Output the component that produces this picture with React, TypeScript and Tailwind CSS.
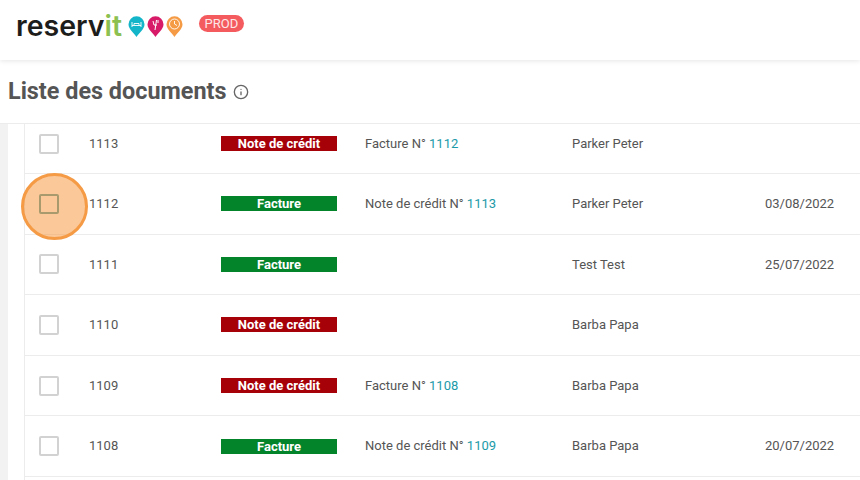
import { Info } from "lucide-react";

const rows = [
  { id: "1113", type: "credit", ref: "Facture N°", refId: "1112", name: "Parker Peter", date: "" },
  { id: "1112", type: "invoice", ref: "Note de crédit N°", refId: "1113", name: "Parker Peter", date: "03/08/2022" },
  { id: "1111", type: "invoice", ref: "", refId: "", name: "Test Test", date: "25/07/2022" },
  { id: "1110", type: "credit", ref: "", refId: "", name: "Barba Papa", date: "" },
  { id: "1109", type: "credit", ref: "Facture N°", refId: "1108", name: "Barba Papa", date: "" },
  { id: "1108", type: "invoice", ref: "Note de crédit N°", refId: "1109", name: "Barba Papa", date: "20/07/2022" },
];

function Pin({ color, children }: { color: string; children: React.ReactNode }) {
  return (
    <svg width="17" height="21" viewBox="0 0 17 21" className="shrink-0">
      <path d="M8.5 21C6 17 .5 13.5.5 8.300a8 8 0 0 1 16 0C16.500 13.500 11 17 8.500 21Z" fill={color} />
      {children}
    </svg>
  );
}

function Logo() {
  return (
    <div className="flex items-center gap-[6px]">
      <div className="font-['Inter',sans-serif] text-[28.500px] font-semibold leading-none text-[#1d1d1b]">
        reserv<span className="text-[#8cc152]">it</span>
      </div>
      <div className="flex items-center gap-[2px]">
        <Pin color="#14b5c8">
          <path d="M4 6v5M13 6v5M4 9.500h9M6 9V7.500h5V9" fill="none" stroke="#fff" strokeWidth="0.9" />
        </Pin>
        <Pin color="#d81b69">
          <path d="M8 14l1.500-10M6 5l1 4h3M11 4v3" fill="none" stroke="#fff" strokeWidth="1" />
        </Pin>
        <Pin color="#f59a45">
          <circle cx="8.500" cy="8" r="5" fill="none" stroke="#fff" strokeWidth="0.9" />
          <path d="M8.500 5v3l2.500 1.500" fill="none" stroke="#fff" strokeWidth="0.9" />
        </Pin>
      </div>
    </div>
  );
}

export default function App() {
  return (
    <div className="relative flex h-[480px] w-[860px] flex-col overflow-hidden bg-white font-['Roboto',sans-serif] text-[#555]">
      <header className="z-10 flex h-[60px] shrink-0 items-start bg-white pl-[16px] pt-[12px] shadow-[0_1px_5px_rgba(0,0,0,0.1)]">
        <Logo />
        <span className="ml-[16px] mt-[3px] rounded-full bg-[#f45b5f] px-[5.500px] text-[13px] leading-[17px] text-[#fde8e8]">PROD</span>
      </header>

      <div className="flex h-[64px] shrink-0 items-center gap-[7px] border-b border-[#ececec] pl-[8px]">
        <h1 className="mt-[1px] text-[23.400px] font-bold leading-none text-[#555]">Liste des documents</h1>
        <Info size={16} strokeWidth={2} className="mt-[1px] text-[#666]" />
      </div>

      <div className="flex min-h-0 flex-1">
        <div className="w-[8px] shrink-0 bg-[#f2f2f2]" />
        <div className="ml-[16px] min-w-0 flex-1 border-l border-[#ececec]">
          {rows.map((row, i) => (
            <div
              key={row.id}
              className={`flex items-center border-b border-[#ececec] text-[13px] ${i === 0 ? "h-[50px] pb-[10px]" : "h-[60.600px]"}`}
            >
              <div
                className={`ml-[14px] h-[20px] w-[20px] shrink-0 rounded-[2px] border-2 bg-white ${row.id === "1112" ? "border-[#4b9a9b]" : "border-[#d2d2d2]"}`}
              />
              <div className="ml-[30px] w-[132px] shrink-0">{row.id}</div>
              {row.type === "credit" ? (
                <div className="h-[15px] w-[116px] shrink-0 bg-[#a60009] text-center text-[13px] font-bold leading-[15px] text-[#fff]">
                  Note de crédit
                </div>
              ) : (
                <div className="h-[15px] w-[116px] shrink-0 bg-[#04842a] text-center text-[13px] font-bold leading-[15px] text-[#fff]">
                  Facture
                </div>
              )}
              <div className="ml-[28px] w-[207px] shrink-0">
                {row.ref} <span className="text-[#1c9aa8]">{row.refId}</span>
              </div>
              <div className="w-[193px] shrink-0">{row.name}</div>
              <div>{row.date}</div>
            </div>
          ))}
        </div>
      </div>

      {/* click marker over the second row checkbox */}
      <div className="absolute left-[21px] top-[173px] h-[67px] w-[67px] rounded-full border-[3px] border-[#f59a45] bg-[#f59a45]/55" />
    </div>
  );
}
